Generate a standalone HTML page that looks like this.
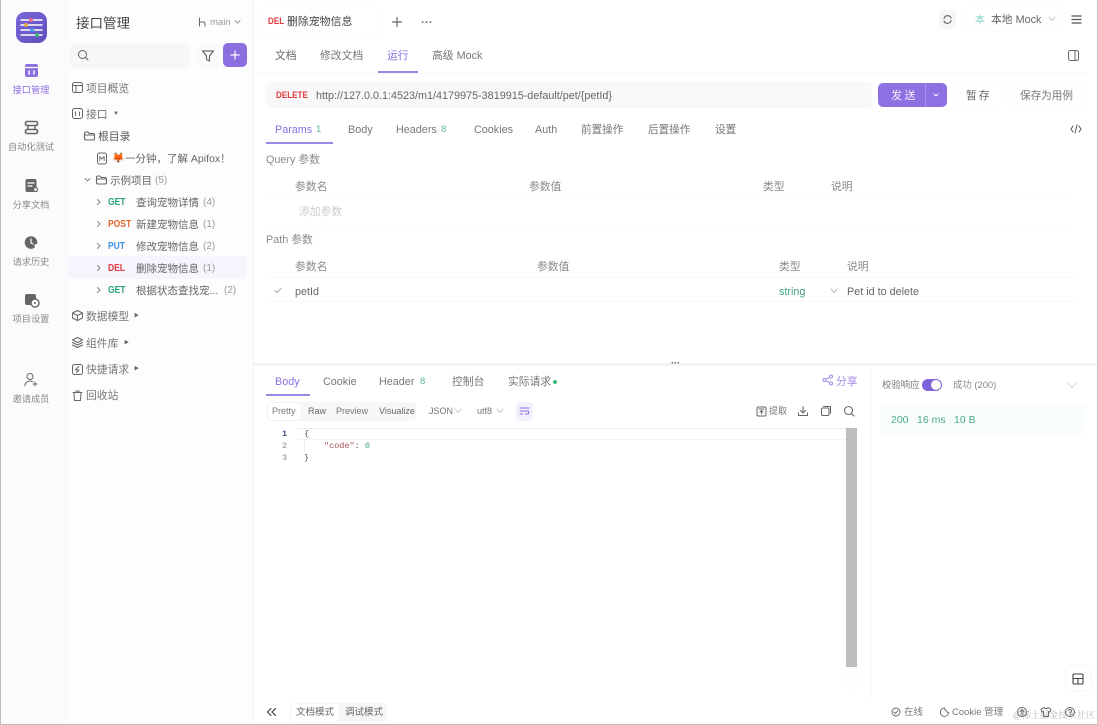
<!DOCTYPE html>
<html lang="zh-CN"><head><meta charset="utf-8"><style>
html,body{margin:0;padding:0;background:#fff}
#p{position:relative;width:1098px;height:725px;overflow:hidden;background:#fff;font-family:"Liberation Sans","Noto Sans CJK SC",sans-serif;font-size:10.8px;color:#6a6a6a;fill:none;stroke:#666;stroke-width:1.2;stroke-linecap:round;stroke-linejoin:round;filter:blur(.3px)}
#p div,#p span.t,#p svg{position:absolute}
.t{position:absolute;line-height:16px;white-space:nowrap;margin-top:1px}
.c{transform:translateX(-50%)}
.r{font-size:9.2px;color:#888}
.l{font-size:10.5px;color:#666}
.m{font-weight:700;font-size:10px;transform:scaleX(.85);transform-origin:left center}
.n{color:#999;font-size:10px}
.b{margin-top:2px}
.s{font-size:9px}
</style></head><body><div id="p">
<div style="left:0;top:0;width:68px;height:725px;background:#fbfbfd"></div>
<div style="left:68px;top:0;width:185px;height:725px;background:#fdfdfe"></div>
<div style="left:253px;top:0;width:1px;height:725px;background:#f3f3f5"></div>
<div style="left:0;top:0;width:1px;height:725px;background:#bbb"></div>
<div style="left:1097px;top:0;width:1px;height:725px;background:#ccc"></div>
<div style="left:0;top:724px;width:1098px;height:1px;background:#bbb"></div>

<!-- logo -->
<div style="left:16px;top:12px;width:31px;height:31px;border-radius:9px;background:linear-gradient(135deg,#7b68d8,#5f4cbd)"></div>
<svg style="left:16px;top:12px" width="31" height="31" viewBox="0 0 31 31"><path d="M5 8H26M5 13H26M5 18H26M5 23H26" stroke="#fff" stroke-width="1.4"/><circle cx="15" cy="8" r="2" fill="#e8698f" stroke="none"/><circle cx="10" cy="13" r="2" fill="#e5b04c" stroke="none"/><circle cx="16" cy="18" r="2" fill="#4a9be8" stroke="none"/><circle cx="21" cy="23" r="2" fill="#3cb87a" stroke="none"/></svg>

<!-- rail -->
<svg style="left:24px;top:63px" width="15" height="15" viewBox="0 0 15 15"><rect x="1" y="1" width="13" height="13" rx="2" fill="#8b6fe0" stroke="none"/><path d="M1 4.500H14" stroke="#fff"/><path d="M5 8V11M10 8V11" stroke="#fff" stroke-width="1.5"/></svg>
<span class="t c r" style="left:31px;top:81px;color:#8b6fe0">接口管理</span>
<svg style="left:24px;top:120px" width="15" height="15" viewBox="0 0 15 15"><rect x="1.500" y="1.500" width="12" height="4" rx="1.500" stroke-width="1.600"/><rect x="1.500" y="9.500" width="12" height="4" rx="1.500" stroke-width="1.600"/><path d="M4 6V9M11 6V9" stroke-width="1.400"/></svg>
<span class="t c r" style="left:31px;top:138px">自动化测试</span>
<svg style="left:24px;top:178px" width="15" height="15" viewBox="0 0 15 15"><rect x="1.500" y="1" width="11" height="13" rx="2" fill="#666" stroke="none"/><path d="M4 5H10M4 8H8" stroke="#fff"/><circle cx="11.500" cy="11.500" r="2" fill="#fff" stroke="#666"/></svg>
<span class="t c r" style="left:31px;top:196px">分享文档</span>
<svg style="left:24px;top:235px" width="15" height="15" viewBox="0 0 15 15"><circle cx="7" cy="7.500" r="6.300" fill="#666" stroke="none"/><path d="M7 4V8L9 9" stroke="#fff"/><circle cx="12.500" cy="11" r="2" fill="#fff" stroke="none"/></svg>
<span class="t c r" style="left:31px;top:253px">请求历史</span>
<svg style="left:24px;top:293px" width="16" height="15" viewBox="0 0 16 15"><rect x="1" y="1" width="11" height="11" rx="2" fill="#666" stroke="none"/><circle cx="11" cy="10" r="4" fill="#fff" stroke="#666" stroke-width="1.400"/><circle cx="11" cy="10" r="1" fill="#666" stroke="none"/></svg>
<span class="t c r" style="left:31px;top:310px">项目设置</span>
<svg style="left:23px;top:372px" width="16" height="16" viewBox="0 0 16 16" stroke-width="1"><circle cx="7" cy="4.500" r="3"/><path d="M2 14C2 10.500 4.500 9 7 9C8 9 9 9.300 9.800 9.700M12 10V14M10 12H14"/></svg>
<span class="t c r" style="left:31px;top:390px">邀请成员</span>

<!-- side panel -->
<span class="t" style="left:76px;top:15px;font-size:13.500px;color:#444">接口管理</span>
<svg style="left:198px;top:17px" width="9" height="10" viewBox="0 0 9 10" stroke-width="1"><path d="M1.500 1V9M1.500 5H5.500C6.500 5 7 5.500 7 6.500V9"/></svg>
<span class="t" style="left:210px;top:14px;font-size:9.500px;color:#999">main</span>
<svg style="left:234px;top:19px" width="7" height="6" viewBox="0 0 7 6" stroke="#999" stroke-width="1"><path d="M1 1.500L3.500 4L6 1.500"/></svg>
<div style="left:69px;top:44px;width:122px;height:24px;border-radius:5px;background:#f7f7f8"></div>
<svg style="left:77px;top:49px" width="13" height="13" viewBox="0 0 13 13" stroke-width="1"><circle cx="5.500" cy="5.500" r="4"/><path d="M8.500 8.500L11 11"/></svg>
<div style="left:196px;top:44px;width:24px;height:24px;border-radius:5px;background:#fafafb"></div>
<svg style="left:201px;top:49px" width="14" height="14" viewBox="0 0 14 14"><path d="M1.500 2H12.500L8.500 7V12L5.500 10.500V7Z"/></svg>
<div style="left:223px;top:43px;width:24px;height:24px;border-radius:5px;background:#8b6fe0"></div>
<svg style="left:229px;top:49px" width="12" height="12" viewBox="0 0 12 12" stroke="#fff"><path d="M6 2V10M2 6H10"/></svg>

<svg style="left:71px;top:81px" width="13" height="13" viewBox="0 0 13 13" stroke-width="1"><rect x="1.500" y="1.500" width="10" height="10" rx="2"/><path d="M1.500 4.500H11.500M5 4.500V11.500"/></svg>
<span class="t" style="left:86px;top:80px;color:#777">项目概览</span>
<svg style="left:71px;top:107px" width="13" height="13" viewBox="0 0 13 13" stroke-width="1"><rect x="1.500" y="1.500" width="10" height="10" rx="2"/><path d="M4.500 5V8.500M8.500 5V8.500"/></svg>
<span class="t" style="left:86px;top:106px;color:#777">接口</span>
<span class="t" style="left:113px;top:105px;font-size:6px;color:#666">▼</span>
<svg style="left:83px;top:130px" width="13" height="12" viewBox="0 0 13 12" stroke-width="1.100"><path d="M1.500 3.500C1.500 2.500 2 2 3 2H5L6 3.500H10C11 3.500 11.500 4 11.500 5V8.500C11.500 9.500 11 10 10 10H3C2 10 1.500 9.500 1.500 8.500ZM1.500 5H11.500"/></svg>
<span class="t" style="left:98px;top:128px;color:#555">根目录</span>
<svg style="left:96px;top:152px" width="12" height="13" viewBox="0 0 12 13" stroke-width="1"><rect x="1.500" y="1" width="9" height="11" rx="2"/><path d="M3.800 8.500V4.500L6 7L8.200 4.500V8.500" stroke-width=".9"/></svg>
<span class="t" style="left:112px;top:150px;font-size:10px">🦊</span>
<span class="t l" style="left:125px;top:150px">一分钟，了解 Apifox！</span>
<svg style="left:84px;top:177px" width="7" height="6" viewBox="0 0 7 6" stroke-width="1" stroke="#888"><path d="M1 1.500L3.500 4L6 1.500"/></svg>
<svg style="left:95px;top:174px" width="13" height="12" viewBox="0 0 13 12" stroke-width="1.100"><path d="M1.500 3.500C1.500 2.500 2 2 3 2H5L6 3.500H10C11 3.500 11.500 4 11.500 5V8.500C11.500 9.500 11 10 10 10H3C2 10 1.500 9.500 1.500 8.500ZM1.500 5H11.500"/></svg>
<span class="t l" style="left:110px;top:172px">示例项目</span>
<span class="t n" style="left:155px;top:172px">(5)</span>

<div style="left:68px;top:256px;width:179px;height:23px;border-radius:5px;background:#f6f4fc"></div>
<svg style="left:96px;top:198px" width="6" height="100" viewBox="0 0 6 100" stroke-width="1" stroke="#888"><path d="M1.500 1.500L4 4L1.500 6.500M1.500 23.500L4 26L1.500 28.500M1.500 45.500L4 48L1.500 50.500M1.500 67.500L4 70L1.500 72.500M1.500 89.500L4 92L1.500 94.500"/></svg>
<span class="t m" style="left:108px;top:194px;color:#2aa775">GET</span>
<span class="t l" style="left:136px;top:194px">查询宠物详情</span><span class="t n" style="left:203px;top:194px">(4)</span>
<span class="t m" style="left:108px;top:216px;color:#e4662c">POST</span>
<span class="t l" style="left:136px;top:216px">新建宠物信息</span><span class="t n" style="left:203px;top:216px">(1)</span>
<span class="t m" style="left:108px;top:238px;color:#3d8fe0">PUT</span>
<span class="t l" style="left:136px;top:238px">修改宠物信息</span><span class="t n" style="left:203px;top:238px">(2)</span>
<span class="t m" style="left:108px;top:260px;color:#e0383e">DEL</span>
<span class="t l" style="left:136px;top:260px">删除宠物信息</span><span class="t n" style="left:203px;top:260px">(1)</span>
<span class="t m" style="left:108px;top:282px;color:#2aa775">GET</span>
<span class="t l" style="left:136px;top:282px">根据状态查找宠...</span><span class="t n" style="left:224px;top:282px">(2)</span>

<svg style="left:71px;top:309px" width="13" height="13" viewBox="0 0 13 13" stroke-width="1"><path d="M6.500 1.500L11.500 4V9L6.500 11.500L1.500 9V4ZM1.500 4L6.500 6.500L11.500 4M6.500 6.500V11.500"/></svg>
<span class="t" style="left:86px;top:308px;color:#777">数据模型</span><span class="t" style="left:134px;top:307px;font-size:5px;color:#666">▶</span>
<svg style="left:71px;top:336px" width="13" height="13" viewBox="0 0 13 13" stroke-width="1"><path d="M6.500 1.500L11.500 4L6.500 6.500L1.500 4ZM1.500 6.500L6.500 9L11.500 6.500M1.500 9L6.500 11.500L11.500 9"/></svg>
<span class="t" style="left:86px;top:335px;color:#777">组件库</span><span class="t" style="left:124px;top:334px;font-size:5px;color:#666">▶</span>
<svg style="left:71px;top:363px" width="13" height="13" viewBox="0 0 13 13" stroke-width="1"><rect x="1.500" y="1.500" width="10" height="10" rx="2"/><path d="M7.500 3.500L4.500 7H8L5.500 9.500"/></svg>
<span class="t" style="left:86px;top:361px;color:#777">快捷请求</span><span class="t" style="left:134px;top:360px;font-size:5px;color:#666">▶</span>
<svg style="left:71px;top:389px" width="13" height="13" viewBox="0 0 13 13" stroke-width="1"><path d="M2 3.500H11M5 3.500V2H8V3.500M3 3.500L3.500 11.500H9.500L10 3.500"/></svg>
<span class="t" style="left:86px;top:387px;color:#777">回收站</span>

<!-- top tabs -->
<div style="left:260px;top:8px;width:120px;height:28px;background:#fff;border-radius:5px 5px 0 0;box-shadow:0 0 2px #f8f8f8"></div>
<span class="t m" style="left:268px;top:13px;font-size:9.500px;color:#e0383e">DEL</span>
<span class="t" style="left:287px;top:13px;font-size:10.900px;color:#444">删除宠物信息</span>
<svg style="left:391px;top:16px" width="12" height="12" viewBox="0 0 12 12"><path d="M6 1.500V10.500M1.500 6H10.500"/></svg>
<span class="t" style="left:421px;top:14px;font-size:11px;color:#666;font-weight:700;letter-spacing:.3px">···</span>
<div style="left:939px;top:10px;width:17px;height:19px;border-radius:5px;background:#f6f6f7"></div>
<svg style="left:942px;top:14px" width="11" height="11" viewBox="0 0 11 11" stroke-width="1.100"><path d="M2 4.500A3.700 3.700 0 0 1 9 4M9 6.500A3.700 3.700 0 0 1 2 7"/></svg>
<div style="left:963px;top:8px;width:99px;height:22px;border-radius:5px;background:#fff;box-shadow:0 0 2px #f2f2f2"></div>
<span class="t" style="left:975px;top:12px;font-size:10px;color:#7fd1c1">本</span>
<span class="t" style="left:991px;top:11px;color:#666">本地 Mock</span>
<svg style="left:1048px;top:16px" width="8" height="6" viewBox="0 0 8 6" stroke="#ccc" stroke-width="1"><path d="M1 1L4 4.500L7 1"/></svg>
<svg style="left:1070px;top:14px" width="13" height="11" viewBox="0 0 13 11" stroke="#555"><path d="M2 2H11M2 5.500H11M2 9H11"/></svg>

<!-- subtabs -->
<span class="t" style="left:275px;top:47px;color:#666">文档</span>
<span class="t" style="left:320px;top:47px;color:#777">修改文档</span>
<span class="t" style="left:387px;top:47px;color:#8b6fe0">运行</span>
<span class="t" style="left:432px;top:47px;color:#777">高级 Mock</span>
<div style="left:378px;top:71px;width:40px;height:2px;background:#9d87e6"></div>
<div style="left:254px;top:73px;width:832px;height:1px;background:#f5f5f6"></div>
<svg style="left:1067px;top:49px" width="13" height="13" viewBox="0 0 13 13" stroke-width="1"><rect x="1.500" y="1.500" width="10" height="10" rx="2"/><path d="M8 1.500V11.500"/></svg>

<!-- url bar -->
<div style="left:266px;top:82px;width:606px;height:26px;border-radius:5px;background:#f8f8f9"></div>
<span class="t m" style="left:276px;top:87px;font-size:9.500px;color:#e0383e">DELETE</span>
<span class="t" style="left:316px;top:87px;color:#666">http://127.0.0.1:4523/m1/4179975-3819915-default/pet/{petId}</span>
<div style="left:878px;top:83px;width:69px;height:24px;border-radius:5px;background:#8d70e2"></div>
<div style="left:925px;top:83px;width:1px;height:24px;background:#a892ea"></div>
<span class="t" style="left:891px;top:87px;font-size:11px;color:#f3f0fd;letter-spacing:2.500px">发送</span>
<svg style="left:933px;top:93px" width="6" height="4" viewBox="0 0 6 4" stroke="#fff" stroke-width="1"><path d="M1 1L3 3L5 1"/></svg>
<div style="left:955px;top:84px;width:46px;height:22px;border-radius:4px;background:#fff;box-shadow:0 0 2px #f2f2f2"></div>
<span class="t" style="left:966px;top:87px;color:#666;letter-spacing:2px">暂存</span>
<div style="left:1010px;top:84px;width:74px;height:22px;border-radius:4px;background:#fff;box-shadow:0 0 2px #f6f6f6"></div>
<span class="t" style="left:1020px;top:87px;font-size:10.600px;color:#777">保存为用例</span>

<!-- req tabs -->
<span class="t" style="left:275px;top:121px;color:#8b6fe0">Params</span><span class="t" style="left:316px;top:121px;font-size:9.500px;color:#5ab990">1</span>
<span class="t" style="left:348px;top:121px;color:#777">Body</span>
<span class="t" style="left:396px;top:121px;color:#777">Headers</span><span class="t" style="left:441px;top:121px;font-size:9.500px;color:#5ab990">8</span>
<span class="t" style="left:474px;top:121px;color:#777">Cookies</span>
<span class="t" style="left:535px;top:121px;color:#777">Auth</span>
<span class="t" style="left:581px;top:121px;font-size:10.600px;color:#777">前置操作</span>
<span class="t" style="left:648px;top:121px;font-size:10.600px;color:#777">后置操作</span>
<span class="t" style="left:715px;top:121px;font-size:10.600px;color:#777">设置</span>
<div style="left:266px;top:142px;width:67px;height:2px;background:#9d87e6"></div>
<svg style="left:1070px;top:124px" width="12" height="10" viewBox="0 0 12 10" stroke-width="1" stroke="#555"><path d="M3 2L1 5L3 8M9 2L11 5L9 8M7 1L5 9"/></svg>

<!-- params -->
<span class="t" style="left:266px;top:151px;color:#8a8a8a">Query 参数</span>
<span class="t" style="left:295px;top:178px;color:#8a8a8a">参数名</span>
<span class="t" style="left:529px;top:178px;color:#8a8a8a">参数值</span>
<span class="t" style="left:763px;top:178px;color:#8a8a8a">类型</span>
<span class="t" style="left:831px;top:178px;color:#8a8a8a">说明</span>
<div style="left:266px;top:197px;width:808px;height:1px;background:#fafafb"></div>
<span class="t" style="left:299px;top:203px;color:#ccc">添加参数</span>
<div style="left:266px;top:224px;width:808px;height:1px;background:#fafafb"></div>
<span class="t" style="left:266px;top:231px;color:#8a8a8a">Path 参数</span>
<span class="t" style="left:295px;top:258px;color:#8a8a8a">参数名</span>
<span class="t" style="left:537px;top:258px;color:#8a8a8a">参数值</span>
<span class="t" style="left:779px;top:258px;color:#8a8a8a">类型</span>
<span class="t" style="left:847px;top:258px;color:#8a8a8a">说明</span>
<div style="left:266px;top:277px;width:808px;height:1px;background:#f7f7f8"></div>
<svg style="left:274px;top:287px" width="8" height="7" viewBox="0 0 8 7" stroke="#aaa" stroke-width="1"><path d="M1 3.500L3 5.500L7 1.500"/></svg>
<span class="t" style="left:295px;top:283px;color:#666">petId</span>
<span class="t" style="left:779px;top:283px;color:#3f9f79">string</span>
<svg style="left:830px;top:288px" width="8" height="6" viewBox="0 0 8 6" stroke="#bbb" stroke-width="1"><path d="M1 1L4 4.500L7 1"/></svg>
<span class="t" style="left:847px;top:283px;color:#666">Pet id to delete</span>
<div style="left:266px;top:301px;width:808px;height:1px;background:#f7f7f8"></div>

<!-- splitter -->
<div style="left:254px;top:363px;width:843px;height:3px;background:#f3f3f4"></div>
<span class="t" style="left:671px;top:355px;font-size:10px;color:#666;font-weight:700;letter-spacing:-.3px">···</span>
<div style="left:870px;top:366px;width:1px;height:332px;background:#f3f3f4"></div>

<!-- response tabs -->
<span class="t" style="left:275px;top:373px;color:#8b6fe0">Body</span>
<span class="t" style="left:323px;top:373px;color:#777">Cookie</span>
<span class="t" style="left:379px;top:373px;color:#777">Header</span><span class="t" style="left:420px;top:373px;font-size:9.500px;color:#5ab990">8</span>
<span class="t" style="left:452px;top:373px;color:#777">控制台</span>
<span class="t" style="left:508px;top:373px;color:#777">实际请求</span>
<div style="left:553px;top:380px;width:4px;height:4px;border-radius:50%;background:#3cb87a"></div>
<div style="left:266px;top:394px;width:44px;height:2px;background:#9d87e6"></div>
<svg style="left:822px;top:374px" width="12" height="12" viewBox="0 0 12 12" stroke="#a08be8" stroke-width="1"><circle cx="2.500" cy="6" r="1.500"/><circle cx="9" cy="2.500" r="1.500"/><circle cx="9" cy="9.500" r="1.500"/><path d="M4 5.200L7.500 3.300M4 6.800L7.500 8.700"/></svg>
<span class="t" style="left:836px;top:373px;color:#a08be8">分享</span>

<span class="t" style="left:882px;top:376px;font-size:9.400px;color:#777">校验响应</span>
<div style="left:922px;top:379px;width:20px;height:12px;border-radius:6px;background:#7d62d8"></div>
<div style="left:931px;top:380px;width:10px;height:10px;border-radius:50%;background:#fff"></div>
<span class="t" style="left:953px;top:376px;font-size:9.400px;color:#888">成功 (200)</span>
<svg style="left:1067px;top:382px" width="10" height="7" viewBox="0 0 10 7" stroke="#ddd" stroke-width="1"><path d="M1 1L5 5.500L9 1"/></svg>
<div style="left:880px;top:405px;width:205px;height:29px;border-radius:4px;background:#f8fcfb"></div>
<span class="t" style="left:891px;top:411px;font-size:10.500px;color:#4bae85">200</span>
<span class="t" style="left:917px;top:411px;font-size:10.500px;color:#4bae85">16 ms</span>
<span class="t" style="left:954px;top:411px;font-size:10.500px;color:#4bae85">10 B</span>

<!-- body toolbar -->
<div style="left:267px;top:402px;width:149px;height:19px;border-radius:4px;background:#f7f7f8"></div>
<div style="left:268px;top:403px;width:33px;height:17px;border-radius:3px;background:#fff;box-shadow:0 0 2px #e6e6e6"></div>
<span class="t s" style="left:272px;top:402px;color:#777">Pretty</span>
<span class="t s" style="left:308px;top:402px;color:#666">Raw</span>
<span class="t s" style="left:336px;top:402px;color:#777">Preview</span>
<span class="t s" style="left:379px;top:402px;color:#666">Visualize</span>
<span class="t s" style="left:429px;top:402px;color:#777">JSON</span>
<svg style="left:454px;top:408px" width="8" height="6" viewBox="0 0 8 6" stroke="#ccc" stroke-width="1"><path d="M1 1L4 4.500L7 1"/></svg>
<span class="t s" style="left:477px;top:402px;color:#777">utf8</span>
<svg style="left:496px;top:408px" width="8" height="6" viewBox="0 0 8 6" stroke="#ccc" stroke-width="1"><path d="M1 1L4 4.500L7 1"/></svg>
<div style="left:516px;top:402px;width:17px;height:19px;border-radius:4px;background:#f4f1fc"></div>
<svg style="left:519px;top:406px" width="11" height="11" viewBox="0 0 11 11" stroke="#8b6fe0" stroke-width="1"><path d="M1 2H10M1 5H9.500V8H6.500M1 8H4"/></svg>

<svg style="left:756px;top:406px" width="11" height="11" viewBox="0 0 11 11" stroke-width="1"><rect x="1" y="1" width="9" height="9" rx="1"/><path d="M3 3H8M5.500 8V4.500M4 6L5.500 4.500L7 6"/></svg>
<span class="t s" style="left:769px;top:402px;color:#777">提取</span>
<svg style="left:797px;top:405px" width="12" height="12" viewBox="0 0 12 12" stroke-width="1"><path d="M6 1.500V7.500M3.500 5.500L6 8L8.500 5.500M1.500 8V10.500H10.500V8"/></svg>
<svg style="left:820px;top:405px" width="12" height="12" viewBox="0 0 12 12" stroke-width="1"><rect x="1.500" y="3" width="7.500" height="7.500" rx="1"/><path d="M3.500 1.500H10.500V8.500"/></svg>
<svg style="left:843px;top:405px" width="12" height="12" viewBox="0 0 12 12" stroke-width="1.100"><circle cx="5.500" cy="5.500" r="4"/><path d="M8.500 8.500L11 11"/></svg>

<!-- code -->
<div style="left:298px;top:428px;width:548px;height:1px;background:#eee"></div>
<div style="left:298px;top:439px;width:548px;height:1px;background:#f2f2f2"></div>
<div style="left:846px;top:428px;width:11px;height:239px;background:#bdbdbd"></div>
<div style="left:846px;top:667px;width:11px;height:23px;background:#fdfdfd"></div>
<div style="left:304px;top:440px;width:1px;height:12px;background:#eee"></div>
<span class="t" style="left:282px;top:425px;font:700 8.500px/16px 'Liberation Mono',monospace;color:#3d4a80">1</span>
<span class="t" style="left:282px;top:437px;font:8.500px/16px 'Liberation Mono',monospace;color:#888">2</span>
<span class="t" style="left:282px;top:449px;font:8.500px/16px 'Liberation Mono',monospace;color:#888">3</span>
<span class="t" style="left:304px;top:425px;font:8.500px/16px 'Liberation Mono',monospace;color:#555">{</span>
<span class="t" style="left:324px;top:437px;font:8.500px/16px 'Liberation Mono',monospace;color:#a5525c">"code"<span style="color:#555">:</span> <span style="color:#3f9f79">0</span></span>
<span class="t" style="left:304px;top:449px;font:8.500px/16px 'Liberation Mono',monospace;color:#555">}</span>

<!-- layout button -->
<div style="left:1067px;top:667px;width:23px;height:23px;border-radius:4px;background:#fff;box-shadow:0 0 3px #eee"></div>
<svg style="left:1072px;top:673px" width="12" height="12" viewBox="0 0 12 12" stroke-width="1.100" stroke="#444"><rect x="1" y="1" width="10" height="10" rx="1"/><path d="M1 5.500H11M6 5.500V11"/></svg>

<!-- bottom bar -->
<svg style="left:266px;top:707px" width="11" height="10" viewBox="0 0 11 10" stroke="#444"><path d="M5 1.500L1.500 5L5 8.500M9.500 1.500L6 5L9.500 8.500"/></svg>
<div style="left:290px;top:703px;width:97px;height:19px;border-radius:4px;background:#f6f6f7"></div>
<div style="left:291px;top:704px;width:47px;height:17px;border-radius:3px;background:#fff"></div>
<span class="t b" style="left:296px;top:703px;font-size:9.500px;color:#666">文档模式</span>
<span class="t b" style="left:345px;top:703px;font-size:9.500px;color:#666">调试模式</span>
<svg style="left:891px;top:707px" width="10" height="10" viewBox="0 0 10 10" stroke-width=".9"><circle cx="5" cy="5" r="4"/><path d="M3 5L4.500 6.500L7 3.500"/></svg>
<span class="t b" style="left:904px;top:703px;font-size:9.500px;color:#777">在线</span>
<svg style="left:939px;top:707px" width="11" height="10" viewBox="0 0 11 10" stroke-width=".9"><path d="M5.500 1A4.200 4.200 0 1 0 9.700 5.500C8.500 5.500 7.500 5 7.500 3.500C6 3.500 5.500 2.500 5.500 1Z"/></svg>
<span class="t b" style="left:952px;top:703px;font-size:9.500px;color:#777">Cookie 管理</span>
<svg style="left:1016px;top:706px" width="12" height="12" viewBox="0 0 12 12" stroke-width="1"><circle cx="6" cy="6" r="4.500"/><path d="M6 9V3.500M4 5.500L6 3.500L8 5.500"/></svg>
<svg style="left:1040px;top:706px" width="12" height="12" viewBox="0 0 12 12" stroke-width="1"><path d="M4 1.500L1 3.500L2 6L3.500 5.500V10.500H8.500V5.500L10 6L11 3.500L8 1.500C7.500 3 4.500 3 4 1.500Z"/></svg>
<svg style="left:1064px;top:706px" width="12" height="12" viewBox="0 0 12 12" stroke-width="1"><circle cx="6" cy="6" r="4.500"/><path d="M4.500 4.800C4.500 3 7.500 3 7.500 4.800C7.500 6 6 6 6 7.200M6 8.800V9"/></svg>
<span class="t" style="left:1013px;top:706px;font-size:9px;letter-spacing:.2px;font-family:'Liberation Serif','Noto Serif CJK SC',serif;color:rgba(120,120,120,.55)">@稀土掘金技术社区</span>
</div></body></html>
